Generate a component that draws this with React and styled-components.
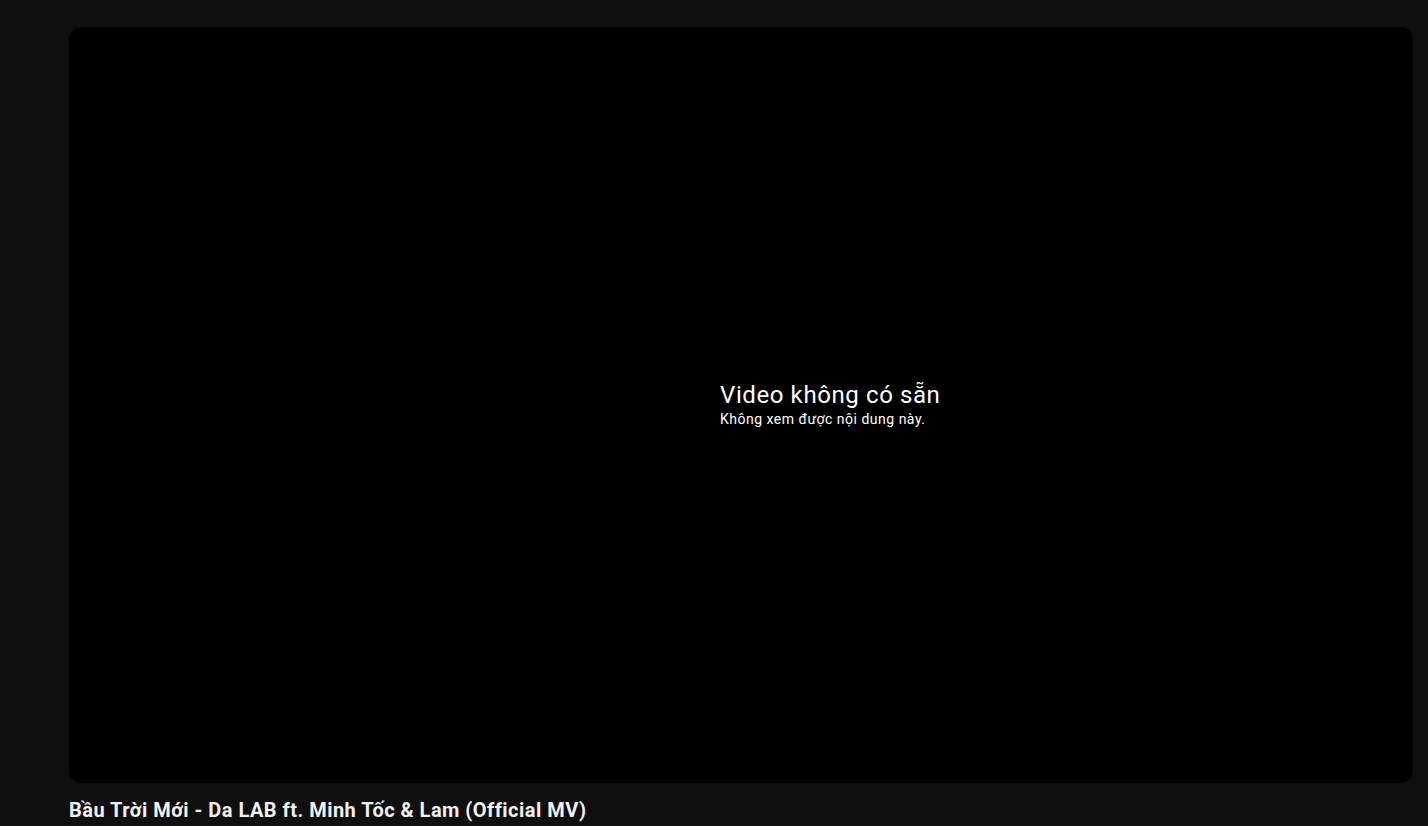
import React from "react";
import styled, { createGlobalStyle } from "styled-components";

const GlobalStyle = createGlobalStyle`
  html, body {
    margin: 0;
    padding: 0;
    background: #0f0f0f;
    overflow: hidden;
  }
  body {
    font-family: Roboto, "Noto Sans", Arial, sans-serif;
  }
`;

const Page = styled.div`
  box-sizing: border-box;
  width: 100%;
  min-height: 826px;
  padding: 27px 15px 0 69px;
  background: #0f0f0f;
`;

const Player = styled.div`
  position: relative;
  width: 100%;
  aspect-ratio: 16 / 9;
  background: #000;
  border-radius: 12px;
  overflow: hidden;
  display: flex;
  align-items: center;
`;

const ErrorContent = styled.div`
  margin-left: calc(50% - 21px);
  display: flex;
  flex-direction: column;
  color: #fff;
`;

const ErrorReason = styled.div`
  font-family: Roboto, Arial, sans-serif;
  font-size: 24px;
  line-height: 28px;
  font-weight: 400;
  letter-spacing: 0.6px;
`;

const ErrorSubreason = styled.div`
  font-family: Roboto, Arial, sans-serif;
  font-size: 14px;
  line-height: 20px;
  font-weight: 400;
  letter-spacing: 0.5px;
`;

const Title = styled.h1`
  margin: 13px 0 0;
  font-family: Roboto, Arial, sans-serif;
  font-size: 20px;
  line-height: 28px;
  font-weight: 700;
  letter-spacing: 0.48px;
  color: #f1f1f1;
`;

export default function App() {
  return (
    <>
      <GlobalStyle />
      <Page>
        <Player>
          <ErrorContent>
            <ErrorReason>Video không có sẵn</ErrorReason>
            <ErrorSubreason>Không xem được nội dung này.</ErrorSubreason>
          </ErrorContent>
        </Player>
        <Title>Bầu Trời Mới - Da LAB ft. Minh Tốc &amp; Lam (Official MV)</Title>
      </Page>
    </>
  );
}
